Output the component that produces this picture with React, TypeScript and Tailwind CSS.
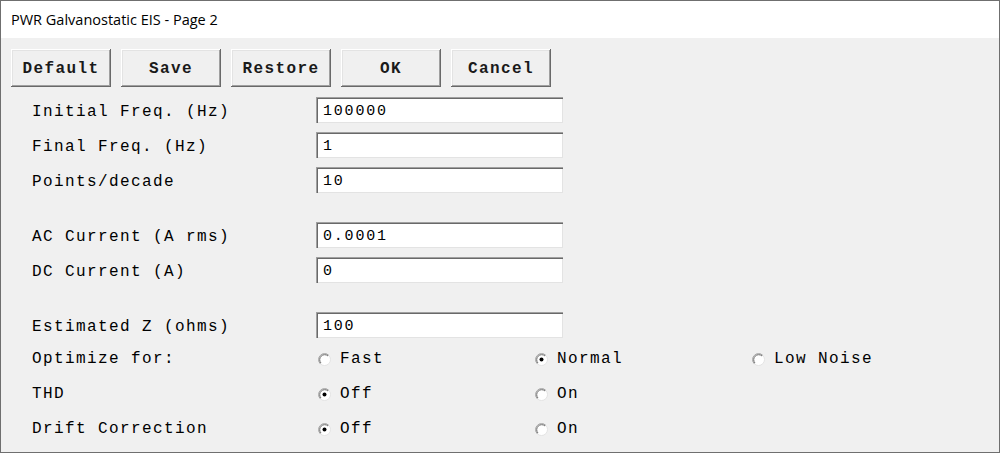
import React from 'react';

const mono = "font-['Liberation_Mono','Courier_New',monospace]";

function Radio({ checked }: { checked?: boolean }) {
  return (
    <svg width="13" height="13" viewBox="0 0 13 13" className="shrink-0">
      <circle cx="6.5" cy="6.5" r="6" fill="#ffffff" stroke="#e3e3e3" strokeWidth="1" />
      <path d="M2.26 10.74 A6 6 0 0 1 10.74 2.26" fill="none" stroke="#a0a0a0" strokeWidth="1" />
      <path d="M2.97 10.03 A5 5 0 0 1 10.03 2.97" fill="none" stroke="#6d6d6d" strokeWidth="1" />
      {checked && <circle cx="6.5" cy="6.5" r="2" fill="#000000" />}
    </svg>
  );
}

function Btn({ label }: { label: string }) {
  return (
    <button className={`w-[100px] h-[38px] bg-[#f0f0f0] ${mono} font-bold text-[16px] tracking-[1.4px] text-[#1a1a1a] pt-[2px] shadow-[inset_-1px_-1px_#696969,inset_1px_1px_#ffffff,inset_-2px_-2px_#a0a0a0,inset_2px_2px_#e3e3e3] flex items-center justify-center`}>
      {label}
    </button>
  );
}

function Field({ label, value, className = '' }: { label: string; value: string; className?: string }) {
  return (
    <div className={`flex items-center h-[26px] ${className}`}>
      <div className={`w-[284px] pt-[3px] ${mono} text-[16px] tracking-[1.4px] text-black`}>{label}</div>
      <div className={`w-[247px] h-[26px] bg-white pl-[7px] pt-[4px] ${mono} text-[15px] tracking-[1.8px] text-black shadow-[inset_1px_1px_#a0a0a0,inset_2px_2px_#696969,inset_-1px_-1px_#e3e3e3]`}>
        {value}
      </div>
    </div>
  );
}

function RadioRow({ label, options, className = '' }: { label: string; options: { text: string; checked?: boolean }[]; className?: string }) {
  return (
    <div className={`flex items-center h-[26px] ${className}`}>
      <div className={`w-[286px] ${mono} text-[16px] tracking-[1.4px] text-black`}>{label}</div>
      {options.map((o) => (
        <div key={o.text} className="w-[217px] flex items-center gap-[9px]">
          <Radio checked={o.checked} />
          <span className={`${mono} text-[16px] tracking-[1.4px] text-black`}>{o.text}</span>
        </div>
      ))}
    </div>
  );
}

export default function App() {
  return (
    <div className="w-[1000px] h-[453px] border border-[#6f6f6f] flex flex-col bg-[#f0f0f0] overflow-hidden">
      <div className="h-[37px] bg-white flex items-center pl-[10px] font-['Open_Sans',sans-serif] text-[14.5px] text-black">
        PWR Galvanostatic EIS - Page 2
      </div>
      <div className="flex-1 pt-[11px]">
        <div className="flex gap-[10px] pl-[10px]">
          <Btn label="Default" />
          <Btn label="Save" />
          <Btn label="Restore" />
          <Btn label="OK" />
          <Btn label="Cancel" />
        </div>
        <div className="pl-[31px] flex flex-col">
          <Field className="mt-[10px]" label="Initial Freq. (Hz)" value="100000" />
          <Field className="mt-[9px]" label="Final Freq. (Hz)" value="1" />
          <Field className="mt-[9px]" label="Points/decade" value="10" />
          <Field className="mt-[29px]" label="AC Current (A rms)" value="0.0001" />
          <Field className="mt-[9px]" label="DC Current (A)" value="0" />
          <Field className="mt-[29px]" label="Estimated Z (ohms)" value="100" />
          <RadioRow
            className="mt-[8px]"
            label="Optimize for:"
            options={[{ text: 'Fast' }, { text: 'Normal', checked: true }, { text: 'Low Noise' }]}
          />
          <RadioRow className="mt-[9px]" label="THD" options={[{ text: 'Off', checked: true }, { text: 'On' }]} />
          <RadioRow className="mt-[9px]" label="Drift Correction" options={[{ text: 'Off', checked: true }, { text: 'On' }]} />
        </div>
      </div>
    </div>
  );
}
